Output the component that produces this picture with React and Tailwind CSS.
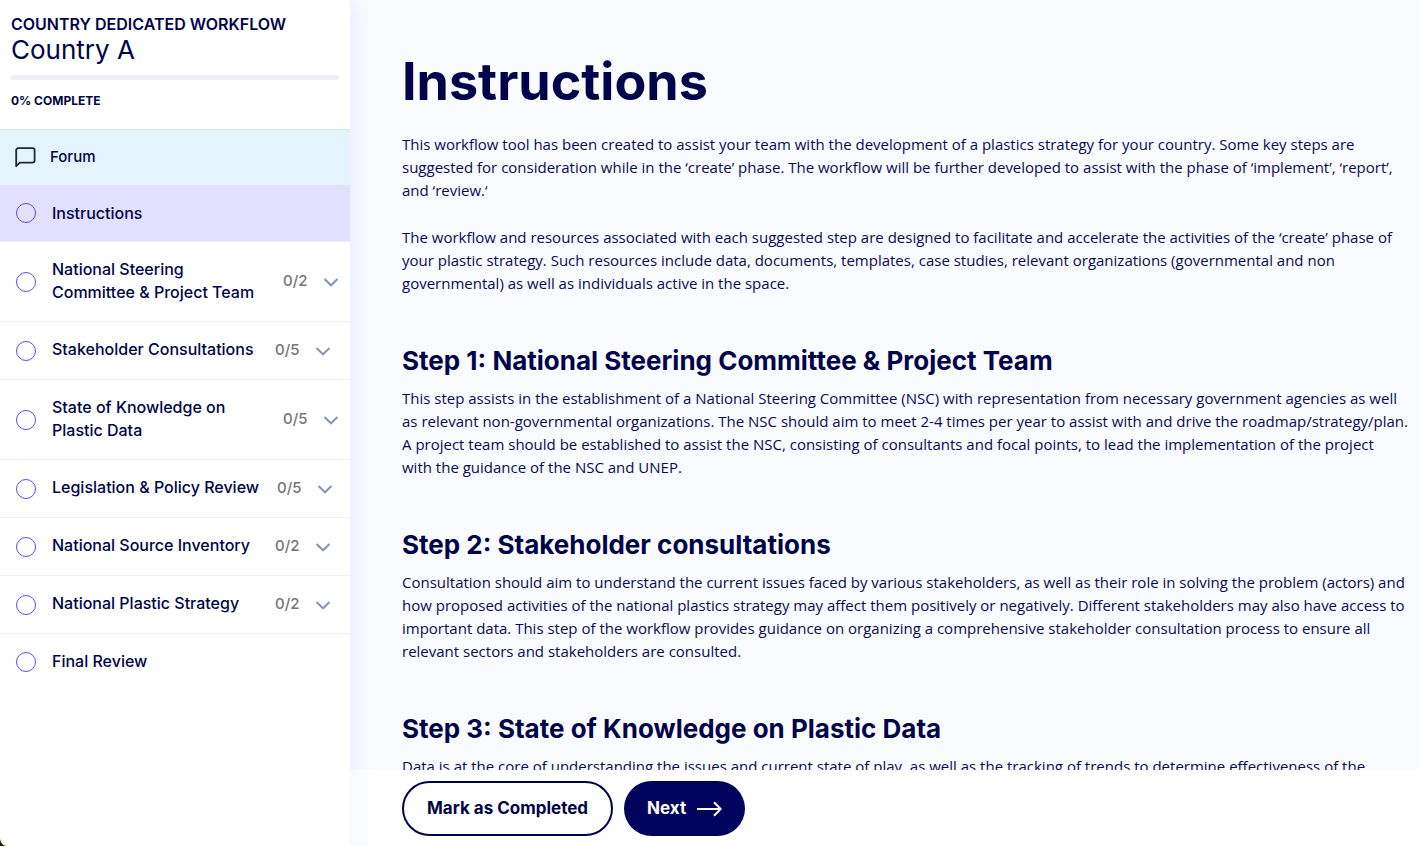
const steps = [
  { label: 'National Steering Committee & Project Team', count: '0/2', row: 'h-[79px] pr-3', text: 'max-w-[204px]' },
  { label: 'Stakeholder Consultations', count: '0/5', row: 'h-[57px] pr-5', text: '' },
  { label: 'State of Knowledge on Plastic Data', count: '0/5', row: 'h-[79px] pr-3', text: 'max-w-[200px]' },
  { label: 'Legislation & Policy Review', count: '0/5', row: 'h-[57px] pr-[18px]', text: '' },
  { label: 'National Source Inventory', count: '0/2', row: 'h-[57px] pr-5', text: '' },
  { label: 'National Plastic Strategy', count: '0/2', row: 'h-[57px] pr-5', text: '' },
];

const sections = [
  {
    title: 'Step 1: National Steering Committee & Project Team',
    body: 'This step assists in the establishment of a National Steering Committee (NSC) with representation from necessary government agencies as well as relevant non-governmental organizations. The NSC should aim to meet 2-4 times per year to assist with and drive the roadmap/strategy/plan. A project team should be established to assist the NSC, consisting of consultants and focal points, to lead the implementation of the project with\u00a0the guidance of the NSC and UNEP.',
  },
  {
    title: 'Step 2: Stakeholder consultations',
    body: 'Consultation should aim to understand the current issues faced by various stakeholders, as well as their role in solving the problem (actors) and how proposed activities of the national plastics strategy may affect them positively or negatively. Different stakeholders may also have access to important data. This step of the workflow provides guidance on organizing a comprehensive stakeholder consultation process to ensure all relevant sectors and stakeholders are consulted.',
  },
  {
    title: 'Step 3: State of Knowledge on Plastic Data',
    body: 'Data is at the core of understanding the issues and current state of play, as well as the tracking of trends to determine effectiveness of the',
  },
];

function StatusCircle() {
  return <span className="size-5 shrink-0 rounded-full border border-[#6048f0]" />;
}

function StepRow({ label, count, row, text }) {
  return (
    <li className="border-b border-[#eeeff1]">
      <button
        type="button"
        className={`flex w-full items-center pl-4 text-left text-base leading-[23px] font-medium ${row}`}
      >
        <StatusCircle />
        <span className="ml-4 flex-1 pb-0.5">
          <span className={`block ${text}`}>{label}</span>
        </span>
        <span className="w-[25px] shrink-0 pb-0.5 text-[15px] text-[#757575]">{count}</span>
        <svg className="ml-4 size-3.5 shrink-0" viewBox="0 0 14 14" fill="none" stroke="#8796b4" strokeWidth="2">
          <path d="M0.5 4l6.5 6.3L13.5 4" />
        </svg>
      </button>
    </li>
  );
}

export default function App() {
  return (
    <div className="relative flex h-screen overflow-hidden bg-[#fafbff] font-['Inter','Liberation_Sans',sans-serif] text-[#00044a]">
      <aside className="z-10 w-[350px] shrink-0 bg-white shadow-[0_0_24px_rgba(90,120,255,0.15)]">
        <header className="h-[129px] px-[11px] pt-[14px]">
          <p className="text-base leading-5 font-semibold">COUNTRY DEDICATED WORKFLOW</p>
          <h2 className="text-[26px] leading-8">Country A</h2>
          <div className="mt-[9px] h-[5px] rounded-full bg-[#eeeff4]" />
          <p className="mt-[11px] text-xs leading-5 font-bold">0% COMPLETE</p>
        </header>
        <nav>
          <ul>
            <li>
              <a href="#forum" className="flex h-14 items-center border-t border-[#dae7f3] bg-[#e5f3ff] pl-[15px] text-[15px] font-medium">
                <svg className="size-[21px]" viewBox="0 0 21 21" fill="none" stroke="#1d2740" strokeWidth="1.8" strokeLinejoin="round">
                  <path d="M1.2 19.2V3.2a2 2 0 0 1 2-2h14.4a2 2 0 0 1 2 2v10.4a2 2 0 0 1-2 2H4.8z" />
                </svg>
                <span className="ml-3.5">Forum</span>
              </a>
            </li>
            <li>
              <a href="#instructions" className="flex h-[57px] items-center border-b border-[#eeeff1] bg-[#e3dfff] pl-4 text-base font-medium">
                <StatusCircle />
                <span className="ml-4">Instructions</span>
              </a>
            </li>
            {steps.map((s) => (
              <StepRow key={s.label} {...s} />
            ))}
            <li>
              <a href="#final-review" className="flex h-14 items-center pl-4 text-base font-medium">
                <StatusCircle />
                <span className="ml-4 pb-0.5">Final Review</span>
              </a>
            </li>
          </ul>
        </nav>
      </aside>

      <div className="flex min-w-0 flex-1 flex-col">
        <main className="min-h-0 flex-1 overflow-hidden pr-3 pl-[52px]">
          <h1 className="mt-[50px] text-[52px] leading-[64px] font-bold">Instructions</h1>
          <div className="mt-[19px] space-y-6 font-['Open_Sans',sans-serif] text-[15px] leading-[23px] text-[#080a55]">
            <p>
              This workflow tool has been created to assist your team with the development of a plastics strategy for your country. Some key steps are suggested for consideration while in the ‘create’ phase. The workflow will be further developed to assist with the phase of ‘implement’, ‘report’, and ‘review.‘
            </p>
            <p>
              The workflow and resources associated with each suggested step are designed to facilitate and accelerate the activities of the ‘create’ phase of your plastic strategy. Such resources include data, documents, templates, case studies, relevant organizations (governmental and non governmental) as well as individuals active in the space.
            </p>
          </div>
          {sections.map((s) => (
            <section key={s.title} className="mt-[50px]">
              <h2 className="text-[26px] leading-8 font-bold">{s.title}</h2>
              <p className="mt-2.5 font-['Open_Sans',sans-serif] text-[15px] leading-[23px] text-[#080a55]">{s.body}</p>
            </section>
          ))}
        </main>
        <footer className="relative z-20 flex h-[76px] shrink-0 items-start gap-[11px] bg-linear-to-r from-[#f7f8ff] to-white to-[24px] pt-[11px] pl-[52px]">
          <button type="button" className="h-[55px] rounded-full border-2 border-[#00044a] bg-white px-[23px] text-[17px] font-bold">
            Mark as Completed
          </button>
          <button type="button" className="flex h-[55px] items-center gap-[11px] rounded-full bg-[#00045c] px-[23px] text-[17px] font-bold text-white">
            Next
            <svg className="h-4 w-[25px]" viewBox="0 0 25 16" fill="none" stroke="currentColor" strokeWidth="2">
              <path d="M0 8h23.5M17 1.3L23.7 8 17 14.7" />
            </svg>
          </button>
        </footer>
      </div>
      <svg className="absolute bottom-0 left-0 z-30 size-[7px]" viewBox="0 0 7 7" fill="#151700">
        <path d="M0 0Q1 6 6 7H0z" />
      </svg>
    </div>
  );
}
